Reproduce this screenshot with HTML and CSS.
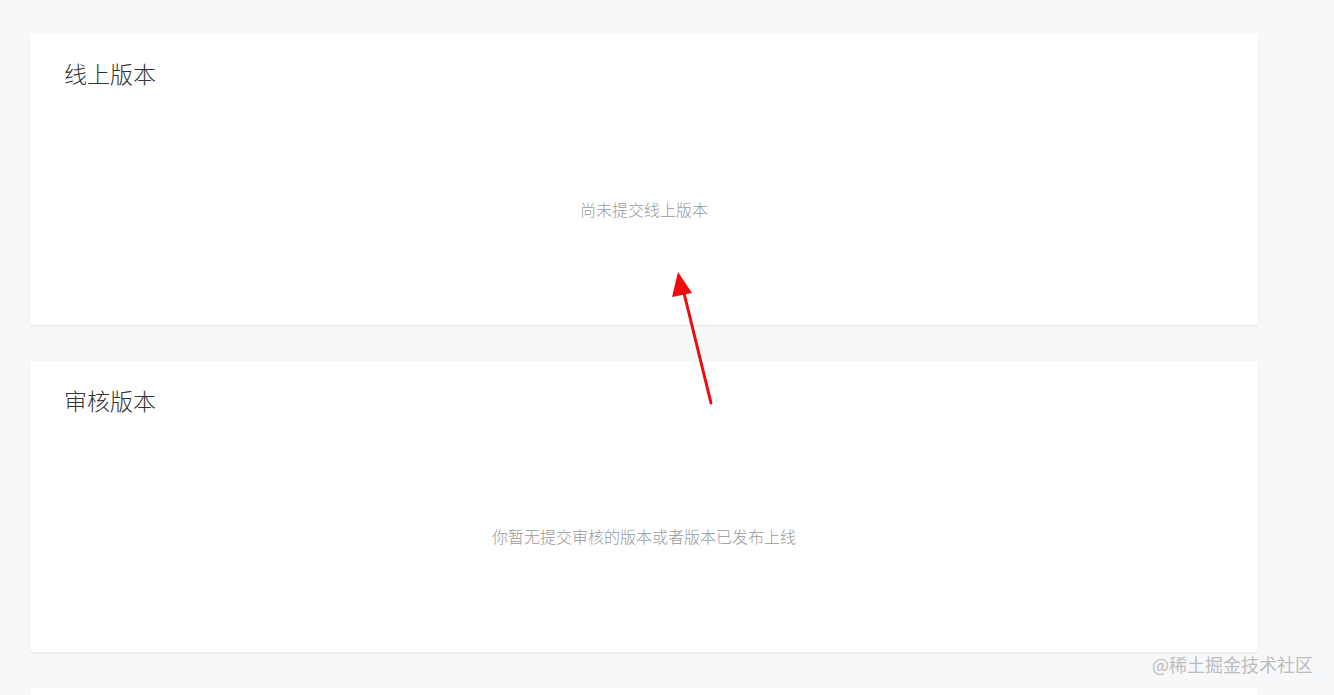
FILE: index.html
```html
<!DOCTYPE html>
<html lang="zh-CN">
<head>
    <meta charset="UTF-8">
    <meta name="viewport" content="width=device-width, initial-scale=1.0">
    <title>版本管理</title>

    <link rel="stylesheet" href="styles.css">
</head>
<body>

    <div class="page">
        <div class="card">
            <div class="card-title">线上版本</div>
            <div class="empty">尚未提交线上版本</div>
        </div>
        <div class="card">
            <div class="card-title">审核版本</div>
            <div class="empty">你暂无提交审核的版本或者版本已发布上线</div>
        </div>
        <div class="card"></div>
    </div>

    <!-- annotation arrow over the screenshot -->
    <svg class="arrow" width="60" height="150" viewBox="0 0 60 150">
        <line x1="44" y1="136" x2="16" y2="22" stroke="#f00a0a" stroke-width="3" stroke-linecap="round"/>
        <polygon points="11,5 5,30 25,26" fill="#f00a0a"/>
    </svg>

    <div class="watermark">@稀土掘金技术社区</div>

</body>
</html>
```

FILE: styles.css
```css
html, body {
    margin: 0;
    padding: 0;
    height: 100vh;
    overflow: hidden;
    background-color: #f7f8fa;
    font-family: "Noto Sans CJK SC", "Noto Sans", sans-serif;
}

.page {
    width: 1228px;
    padding: 34px 0 0 30px;
    display: flex;
    flex-direction: column;
    gap: 36px;
}

.card {
    background-color: #fff;
    border-radius: 4px;
    box-shadow: 0 1px 2px rgba(0, 0, 0, 0.08);
    padding: 24px 34px 0 34px;
    height: 267px;
    flex-shrink: 0;
}

.card-title {
    font-size: 23px;
    line-height: 30px;
    font-weight: 300;
    color: #333;
}

.empty {
    padding-top: 110px;
    font-size: 16px;
    line-height: 22px;
    font-weight: 300;
    color: #999;
    text-align: center;
}

.arrow {
    position: absolute;
    left: 667px;
    top: 267px;
}

.watermark {
    position: absolute;
    left: 1152px;
    top: 651px;
    font-size: 18px;
    line-height: 26px;
    color: #bdbdbd;
}
```
